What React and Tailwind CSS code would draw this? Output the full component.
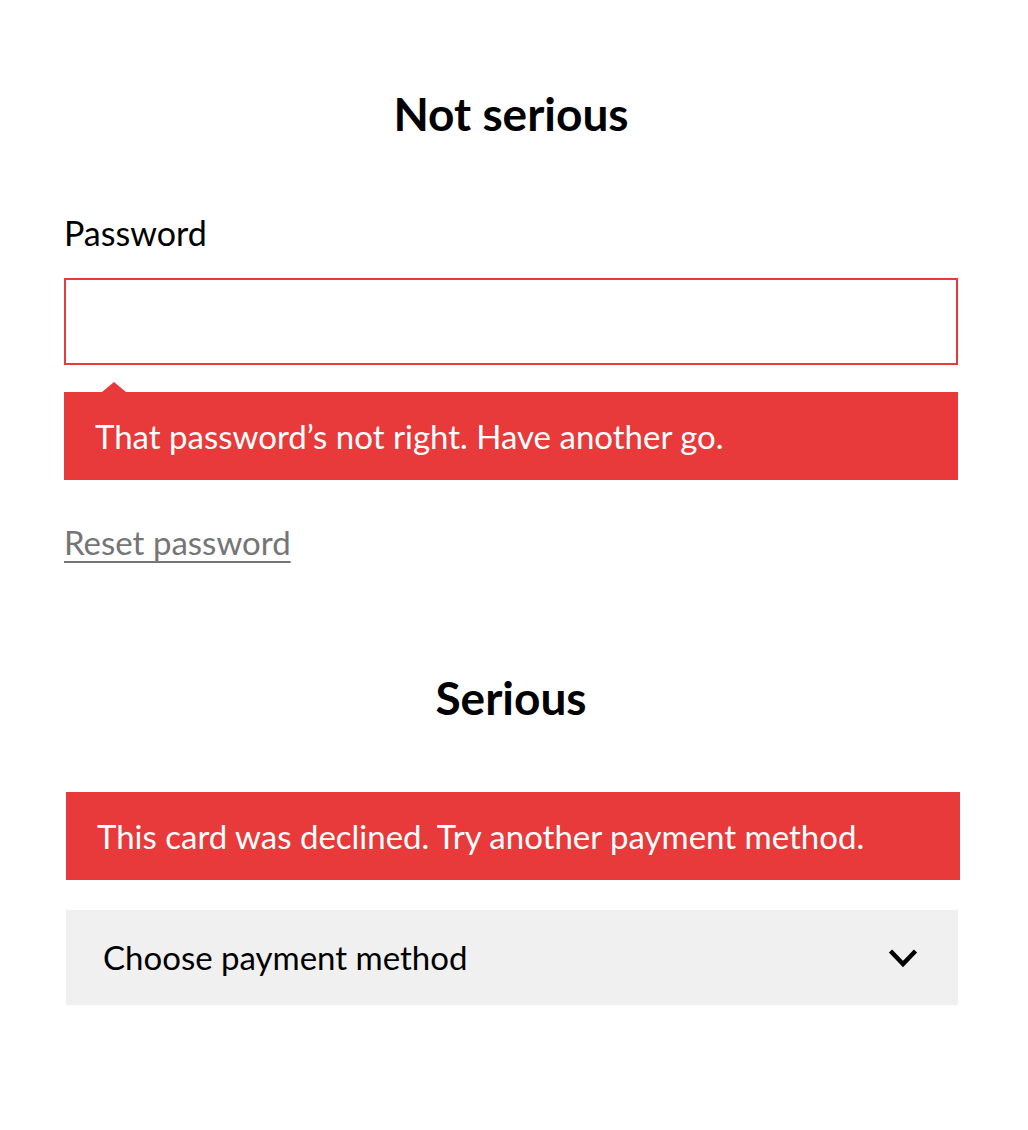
import React from 'react';

const font = { fontFamily: 'Lato, "Noto Sans", sans-serif' };

// Red notice bar, optionally with a small pointer at top-left
const ErrorBar = ({ children, pointer, className = '' }) => (
  <div className={`relative bg-[#e8393b] text-white text-[33px] leading-none h-[88px] flex items-center pl-[31px] ${className}`}>
    {pointer && (
      <span className="absolute -top-[10px] left-[38px] w-0 h-0 border-l-[12px] border-r-[12px] border-b-[10px] border-l-transparent border-r-transparent border-b-[#e8393b]" />
    )}
    <span>{children}</span>
  </div>
);

const Chevron = () => (
  <svg width="30" height="20" viewBox="0 0 30 20" fill="none" className="shrink-0">
    <path d="M2.5 3L15 16L27.5 3" stroke="#000" strokeWidth="4.5" strokeLinejoin="miter" />
  </svg>
);

export default function App() {
  return (
    <div className="bg-white min-h-[1130px] text-black" style={font}>
      <div className="ml-[64px] w-[894px] pt-[88px]">
        <h2 className="text-center font-bold text-[46px] leading-[52px]">Not serious</h2>

        <label className="block mt-[73px] text-[34px] leading-[40px]">Password</label>
        <input
          type="password"
          className="block mt-[25px] w-full h-[87px] border-2 border-[#e8393b] outline-none px-4"
        />
        <ErrorBar pointer className="mt-[27px]">
          That password’s not right. Have another go.
        </ErrorBar>
        <a href="#" className="inline-block mt-[42px] text-[33px] leading-[40px] text-[#757575] underline underline-offset-[6px] decoration-2">
          Reset password
        </a>
      </div>

      <div className="ml-[66px] w-[894px] mt-[110px]">
        <h2 className="text-center font-bold text-[46px] leading-[52px] -ml-[4px]">Serious</h2>
        <ErrorBar className="mt-[68px]">
          This card was declined. Try another payment method.
        </ErrorBar>
        <button className="mt-[30px] w-[892px] h-[95px] bg-[#f0f0f0] flex items-center justify-between pl-[37px] pr-[40px] text-[33px] text-left">
          <span>Choose payment method</span>
          <Chevron />
        </button>
      </div>
    </div>
  );
}
